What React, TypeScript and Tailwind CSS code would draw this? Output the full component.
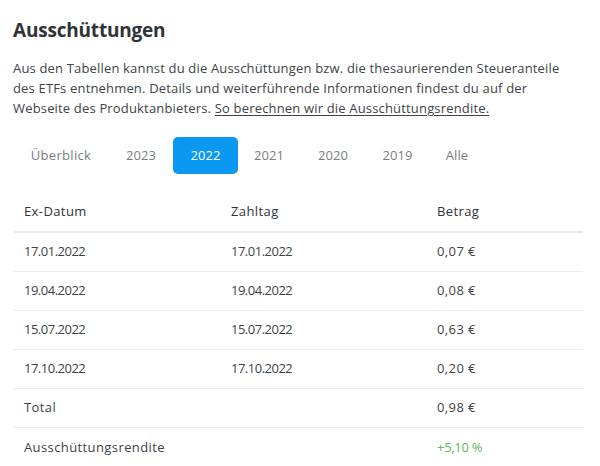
import React from "react";

const tabs: [string, string][] = [
  ["Überblick", "w-[96px]"],
  ["2023", "w-[64px]"],
  ["2022", "w-[65px]"],
  ["2021", "w-[62px]"],
  ["2020", "w-[66px]"],
  ["2019", "w-[63px]"],
  ["Alle", "w-[56px]"],
];

const rows = [
  ["17.01.2022", "17.01.2022", "0,07 €"],
  ["19.04.2022", "19.04.2022", "0,08 €"],
  ["15.07.2022", "15.07.2022", "0,63 €"],
  ["17.10.2022", "17.10.2022", "0,20 €"],
];

export default function App() {
  return (
    <div
      className="w-[600px] h-[466px] bg-white pl-[13px] pt-[16px] text-[#3d4348] overflow-hidden"
      style={{ fontFamily: '"Open Sans", "Noto Sans", sans-serif' }}
    >
      <h2 className="text-[19px] leading-[28px] font-bold text-[#2f3337] tracking-[-0.2px]">
        Ausschüttungen
      </h2>
      <p className="mt-[14px] text-[13px] leading-[20px] text-[#3d4348] w-[575px] tracking-[0.17px]">
        Aus den Tabellen kannst du die Ausschüttungen bzw. die thesaurierenden Steueranteile
        <br />
        des ETFs entnehmen. Details und weiterführende Informationen findest du auf der
        <br />
        Webseite des Produktanbieters.{" "}
        <a className="underline underline-offset-2">So berechnen wir die Ausschüttungsrendite.</a>
      </p>
      <div className="mt-[19px] flex h-[37px]">
        {tabs.map(([t, w]) => (
          <div
            key={t}
            className={
              (t === "2022"
                ? "rounded-[5px] bg-[#0b98f0] text-white "
                : "text-[#7a7e82] ") +
              "flex items-center justify-center text-[13px] " +
              w +
              (t === "Überblick" ? " tracking-[0.3px]" : " tracking-[0.1px]")
            }
          >
            {t}
          </div>
        ))}
      </div>
      <div className="mt-[19px] w-[570px] text-[13px] tracking-[0.4px]">
        <div className="flex h-[40px] border-b-2 border-[#e9eaeb] text-[#2f3337] font-medium">
          <div className="w-[207px] pl-[11px] flex items-center">Ex-Datum</div>
          <div className="w-[206px] pl-[11px] flex items-center">Zahltag</div>
          <div className="flex-1 pl-[11px] flex items-center">Betrag</div>
        </div>
        {rows.map((r) => (
          <div key={r[0]} className="flex h-[39px] border-b border-[#ececec]">
            <div className="w-[207px] pl-[11px] flex items-center tracking-[-0.5px]">{r[0]}</div>
            <div className="w-[206px] pl-[11px] flex items-center tracking-[-0.5px]">{r[1]}</div>
            <div className="flex-1 pl-[11px] flex items-center">{r[2]}</div>
          </div>
        ))}
        <div className="flex h-[39px] border-b border-[#ececec]">
          <div className="w-[207px] pl-[11px] flex items-center">Total</div>
          <div className="w-[206px] pl-[11px] flex items-center"></div>
          <div className="flex-1 pl-[11px] flex items-center">0,98 €</div>
        </div>
        <div className="flex h-[39px]">
          <div className="w-[207px] pl-[11px] flex items-center">Ausschüttungsrendite</div>
          <div className="w-[206px] pl-[11px] flex items-center"></div>
          <div className="flex-1 pl-[11px] flex items-center text-[#5cb85c] tracking-[-0.3px]">+5,10 %</div>
        </div>
      </div>
    </div>
  );
}
